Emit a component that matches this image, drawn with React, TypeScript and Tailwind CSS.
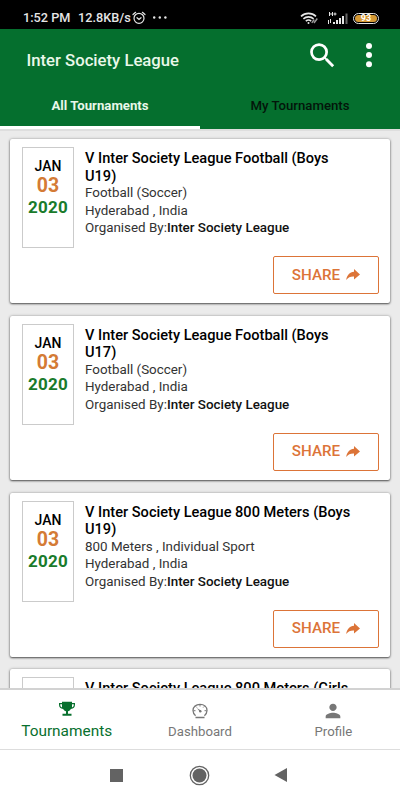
import React, { FC } from "react";
import { MdPerson, MdSearch } from "react-icons/md";

interface Tournament {
  title: string[];
  sport: string;
}

interface NavItemProps {
  label: string;
  active?: boolean;
  children: React.ReactNode;
}

const tournaments: Tournament[] = [
  { title: ["V Inter Society League Football (Boys", "U19)"], sport: "Football (Soccer)" },
  { title: ["V Inter Society League Football (Boys", "U17)"], sport: "Football (Soccer)" },
  { title: ["V Inter Society League 800 Meters (Boys", "U19)"], sport: "800 Meters , Individual Sport" },
  { title: ["V Inter Society League 800 Meters (Girls", "U19)"], sport: "800 Meters , Individual Sport" },
];

const StatusBar: FC = () => (
  <div className="flex h-[29px] shrink-0 items-center bg-black pt-[7px] pl-[23px] pr-[21px] text-[12.7px] font-medium text-[#e6e6e6]">
    <span className="w-[55px] whitespace-nowrap">1:52 PM</span>
    <span className="w-[54px] whitespace-nowrap">12.8KB/s</span>
    <svg width="15" height="14" viewBox="0 0 15 14" fill="none" stroke="#e6e6e6" strokeWidth="1.2" strokeLinecap="round">
      <circle cx="7" cy="7.3" r="5" />
      <path d="M5 6.7l2 1.8 2-1.8M1 3.5L3.6 1.3M13 3.5L10.4 1.3" />
    </svg>
    <svg className="ml-[5px]" width="16" height="4" viewBox="0 0 16 4" fill="#e6e6e6">
      <circle cx="2.2" cy="1.5" r="1.2" />
      <circle cx="7.8" cy="1.5" r="1.2" />
      <circle cx="13.4" cy="1.5" r="1.2" />
    </svg>
    <svg className="ml-auto" width="19" height="13" viewBox="0 0 19 13" fill="none" stroke="#e6e6e6" strokeWidth="1.6">
      <path d="M1 4.3C5.2 0.4 11.8 0.4 16 4.3M3.4 6.8C6.3 4.2 10.7 4.2 13.6 6.8M5.8 9.2C7.4 7.8 9.6 7.8 11.2 9.2" />
      <circle cx="8.5" cy="11" r="1" fill="#e6e6e6" stroke="none" />
      <path d="M11.8 10.8l2.4-3.3M14 11l3.3-4.5" stroke="#999" strokeWidth="1.4" />
    </svg>
    <svg className="ml-[8px]" width="22" height="13" viewBox="0 0 22 13" fill="#e6e6e6">
      <path d="M2 0h1v4H2zM3 1.5h2v1H3zM5 0h1v4H5zM6.5 1.5h3v1h-3zM7.5.5h1v3h-1zM1 8h1v4H1zM3 7h1v4H3z" />
      <path d="M6 10h2v2H6zM9 8h2v4H9zM12 6h2v6h-2zM15 4h2v8h-2z" />
      <path d="M18.5 1.5h2V12h-2z" fill="#666" />
    </svg>
    <div className="ml-[4px] flex h-[11px] w-[26px] items-center justify-center rounded-full border border-[#e6e6e6] p-px">
      <span className="flex h-full w-full items-center justify-center rounded-full bg-[#d69a35] text-[9px] leading-none font-bold text-white">
        93
      </span>
    </div>
  </div>
);

const Header: FC = () => (
  <header className="h-[100px] shrink-0 bg-[#056f2e] text-white">
    <div className="flex h-[57px] items-center pl-[26.5px] pr-[25px]">
      <h1 className="mt-[6px] text-[16.7px] font-medium text-[#e9f8e9]">Inter Society League</h1>
      <MdSearch className="mt-[-5px] ml-auto size-[33px]" />
      <svg className="mt-[-5px] ml-[24px]" width="12" height="28" viewBox="0 0 12 28" fill="currentColor">
        <circle cx="6" cy="5" r="3" />
        <circle cx="6" cy="14" r="3" />
        <circle cx="6" cy="23.2" r="3" />
      </svg>
    </div>
    <div className="grid h-[43px] grid-cols-2 text-center text-[13.2px] leading-[39px] font-medium">
      <div className="border-b-[3px] border-white font-bold text-[#e9f8e9]">All Tournaments</div>
      <div className="text-[#03150a]">My Tournaments</div>
    </div>
  </header>
);

const TournamentCard: FC<Tournament> = ({ title, sport }) => (
  <article className="flex h-[164px] shrink-0 flex-col rounded-[2px] bg-white pt-2 pr-[11px] pl-3 shadow-[0_1px_2px_rgba(0,0,0,0.6),0_0_3px_rgba(0,0,0,0.3)]">
    <div className="flex h-[109px]">
      <div className="h-[101px] w-[52px] shrink-0 border border-[#cbcbcb] pt-[8px] text-center font-bold">
        <div className="text-sm leading-[20px] font-medium text-black">JAN</div>
        <div className="text-[19.5px] leading-[20px] text-[#d47b35]">03</div>
        <div className="text-[17px] leading-[22px] tracking-[0.3px] text-[#197b2b]">2020</div>
      </div>
      <div className="mt-[2px] ml-[11px] text-[13.4px] leading-[17.5px] whitespace-nowrap text-[#333]">
        <h2 className="-mb-px pt-px text-[14.6px] font-medium text-black">
          {title[0]}
          <br />
          {title[1]}
        </h2>
        <p>{sport}</p>
        <p>Hyderabad , India</p>
        <p>
          Organised By:<span className="font-medium text-[#111]">Inter Society League</span>
        </p>
      </div>
    </div>
    <button className="flex h-[38px] w-[106px] items-center justify-center gap-[6px] self-end rounded-[2px] border border-[#dc7438] text-[15.2px] font-medium text-[#dc7438]">
      SHARE
      <svg width="14" height="12" viewBox="0 0 14 12" fill="currentColor">
        <path d="M8 0L14 5.4 8 10.5V7.5C4.8 7.3 2.2 8.3.2 11 .9 6.4 3.6 3.2 8 2.8z" />
      </svg>
    </button>
  </article>
);

const NavItem: FC<NavItemProps> = ({ label, active, children }) => (
  <div className={`flex flex-col items-center pt-[11px] ${active ? "text-[#08702e]" : "text-[#777]"}`}>
    <div className="flex h-[20px] items-center justify-center">{children}</div>
    <span className={active ? "text-[15.4px] leading-[20px]" : "text-[13.2px] leading-[21px]"}>{label}</span>
  </div>
);

const BottomNav: FC = () => (
  <nav className="grid h-[61px] shrink-0 grid-cols-3 border-t-2 border-[#d2d2d2] bg-white">
    <NavItem label="Tournaments" active>
      <svg className="mt-[-4px]" width="16" height="16" viewBox="0 0 16 16" fill="currentColor">
        <path d="M3 .7h10V2h3v1.8c0 2.4-1.6 3.9-4.1 4.3-.7 1.2-1.6 2-2.9 2.2v2.5h3.5v2h-9v-2H7v-2.5c-1.300-.2-2.200-1-2.900-2.200C1.600 7.700 0 6.200 0 3.800V2h3zM1.200 3.200v.6c0 1.300.6 2.200 1.800 2.700V3.200zm11.800 0v3.300c1.200-.5 1.800-1.400 1.800-2.700v-.6z" />
      </svg>
    </NavItem>
    <NavItem label="Dashboard">
      <svg width="18" height="18" viewBox="0 0 18 18" fill="none" stroke="currentColor" strokeWidth="1.3">
        <path d="M4.600 13.700A6.800 6.800 0 0 1 2 8.500C2 4.700 5 2.300 9 2.300s7 2.400 7 6.200a6.800 6.800 0 0 1-2.600 5.200M4.500 15.500h9" />
        <path d="M9 2.500v2M2.500 8.700h2M13.500 8.700h2M4.600 4.300l1.200 1.200M13.400 4.300l-1.200 1.200" strokeWidth="1" />
        <path d="M5.800 6l4.100 2.400-1 1.400z" fill="currentColor" stroke="none" />
        <circle cx="9.3" cy="9.2" r="1.2" fill="currentColor" stroke="none" />
      </svg>
    </NavItem>
    <NavItem label="Profile">
      <MdPerson className="size-[22px]" />
    </NavItem>
  </nav>
);

const SystemBar: FC = () => (
  <div className="flex h-[51px] shrink-0 items-center border-t border-[#ddd] bg-white pl-[110px] text-[#636363]">
    <div className="size-[13px] bg-current" />
    <svg className="ml-[66px]" width="21" height="21" viewBox="0 0 21 21">
      <circle cx="10.5" cy="10.5" r="9.2" fill="none" stroke="currentColor" strokeWidth="1.3" />
      <circle cx="10.5" cy="10.5" r="7" fill="currentColor" />
    </svg>
    <svg className="ml-[64px]" width="13" height="14" viewBox="0 0 13 14" fill="currentColor">
      <path d="M13 0v14L.5 7z" />
    </svg>
  </div>
);

const App: FC = () => (
  <div className="flex h-[800px] w-[400px] flex-col overflow-hidden bg-white font-[Roboto,sans-serif]">
    <StatusBar />
    <Header />
    <main className="flex min-h-0 grow flex-col gap-[12.8px] overflow-hidden border-t-2 border-[#dedede] bg-[#ebebeb] px-[10px] pt-2">
      {tournaments.map((item) => (
        <TournamentCard key={item.title.join(" ")} {...item} />
      ))}
    </main>
    <BottomNav />
    <SystemBar />
  </div>
);

export default App;
